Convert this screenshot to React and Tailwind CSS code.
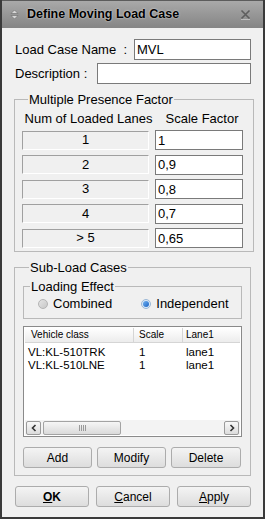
import React from 'react';

const font = { fontFamily: '"Liberation Sans", Arial, sans-serif' };

const lanes = [
    { label: '1', value: '1' },
    { label: '2', value: '0,9' },
    { label: '3', value: '0,8' },
    { label: '4', value: '0,7' },
    { label: '> 5', value: '0,65' },
];

const subCases = [
    { vehicle: 'VL:KL-510TRK', scale: '1', lane: 'lane1' },
    { vehicle: 'VL:KL-510LNE', scale: '1', lane: 'lane1' },
];

function Btn({ children, className = '' }) {
    return (
        <button
            type="button"
            className={"h-[21px] rounded-[3px] border border-[#acacac] bg-gradient-to-b from-[#f4f4f4] to-[#dddddd] text-[12px] text-black leading-none " + className}
        >
            {children}
        </button>
    );
}

function Radio({ checked, label }) {
    return (
        <label className="flex items-center gap-[5px]">
            {checked ? (
                <span className="w-[10px] h-[10px] rounded-full border border-[#9bb8d6] bg-[#dbe9f7] flex items-center justify-center">
                    <span className="w-[6px] h-[6px] rounded-full bg-gradient-to-br from-[#6fb2f2] to-[#1b64c4]" />
                </span>
            ) : (
                <span className="w-[10px] h-[10px] rounded-full border border-[#b4b4b4] bg-gradient-to-br from-[#e4e4e4] to-[#c8c8c8]" />
            )}
            <span className="text-[13px] text-black">{label}</span>
        </label>
    );
}

export default function App() {
    return (
        <div className="w-[265px] h-[519px] bg-[#3a3a3a] px-[2px] pb-[2px] flex flex-col" style={font}>
            {/* title bar */}
            <div className="h-[28px] shrink-0 flex items-center bg-gradient-to-b from-[#a9a9a9] to-[#858585] border-t border-[#5c5c5c] pl-[8px] pr-[12px]">
                <svg width="9" height="11" viewBox="0 0 9 11" className="mr-[8px]">
                    <path d="M4.5 1 L8 4.5 L1 4.5 Z" fill="#d8d8d8" stroke="#6a6a6a" strokeWidth="0.6" />
                    <path d="M4.5 10 L8 6.5 L1 6.5 Z" fill="#d8d8d8" stroke="#6a6a6a" strokeWidth="0.6" />
                </svg>
                <span className="text-[12.5px] font-bold text-black [text-shadow:0_0_2px_#e8e8e8]">Define Moving Load Case</span>
                <svg width="11" height="11" viewBox="0 0 11 11" className="ml-auto">
                    <path d="M1.5 1.5 L9.5 9.5 M9.5 1.5 L1.5 9.5" stroke="#5e5e5e" strokeWidth="1.6" />
                    <path d="M1 10.5 H10" stroke="#bdbdbd" strokeWidth="1" />
                </svg>
            </div>

            {/* body */}
            <div className="flex-1 bg-[#f0f0f0] px-[12px] pt-[11px] flex flex-col text-black">
                <div className="flex items-center h-[21px]">
                    <span className="text-[13px] w-[120px] pl-[1px]">Load Case Name&nbsp;&nbsp;:</span>
                    <input className="h-[21px] w-[117px] ml-auto border border-[#7a7a7a] bg-white px-[2px] text-[13px] outline-none" defaultValue="MVL" />
                </div>
                <div className="flex items-center h-[21px] mt-[3px]">
                    <span className="text-[13px] pl-[1px]">Description :</span>
                    <input className="h-[21px] w-[154px] ml-auto border border-[#7a7a7a] bg-white px-[2px] text-[13px] outline-none" />
                </div>

                {/* Multiple Presence Factor */}
                <fieldset className="mt-[8px] border border-[#b9b9b9] px-[7px] pb-[3px]">
                    <legend className="ml-[6px] px-[1px] text-[13px] leading-[15px]">Multiple Presence Factor</legend>
                    <div className="flex text-[13px] h-[16px] mt-[4px] items-center">
                        <span className="w-[133px] text-center">Num of Loaded Lanes</span>
                        <span className="ml-[3px] w-[88px] text-center">Scale Factor</span>
                    </div>
                    <div className="flex flex-col gap-[4.5px] mt-[3px]">
                        {lanes.map(l => (
                            <div key={l.label} className="flex items-center h-[20px]">
                                <div className="w-[127px] h-[19px] border-l border-t border-[#a0a0a0] border-b border-r border-b-white border-r-white bg-[#f0f0f0] flex items-center justify-center text-[13px]">
                                    {l.label}
                                </div>
                                <input
                                    className="ml-[6px] w-[88px] h-[20px] border border-[#7a7a7a] bg-white px-[2px] text-[13px] outline-none"
                                    defaultValue={l.value}
                                />
                            </div>
                        ))}
                    </div>
                </fieldset>

                {/* Sub-Load Cases */}
                <fieldset className="mt-[8px] border border-[#b9b9b9] px-[8px] pb-[7px]">
                    <legend className="ml-[6px] px-[1px] text-[13px] leading-[15px]">Sub-Load Cases</legend>
                    <fieldset className="mt-[4px] border border-[#b9b9b9] pb-[5px]">
                        <legend className="ml-[6px] px-[1px] text-[13px] leading-[15px]">Loading Effect</legend>
                        <div className="flex items-center h-[19px] pl-[14px]">
                            <Radio label="Combined" />
                            <div className="ml-[29px]">
                                <Radio checked label="Independent" />
                            </div>
                        </div>
                    </fieldset>

                    {/* list */}
                    <div className="mt-[7px] h-[111px] border border-[#8a8a8a] bg-white flex flex-col p-[1px]">
                        <div className="flex h-[15px] bg-gradient-to-b from-[#ffffff] to-[#ececec] border-b border-[#d5d5d5] text-[10px] leading-none">
                            <div className="w-[109px] pl-[6px] flex items-center border-r border-[#d5d5d5]">Vehicle class</div>
                            <div className="w-[49px] pl-[5px] flex items-center border-r border-[#d5d5d5]">Scale</div>
                            <div className="flex-1 pl-[3px] flex items-center">Lane1</div>
                        </div>
                        <div className="flex-1 pt-[3px]">
                            {subCases.map(s => (
                                <div key={s.vehicle} className="flex h-[12.5px] text-[11.5px] leading-[12.5px]">
                                    <div className="w-[109px] pl-[3px]">{s.vehicle}</div>
                                    <div className="w-[49px] pl-[5px]">{s.scale}</div>
                                    <div className="flex-1 pl-[3px]">{s.lane}</div>
                                </div>
                            ))}
                        </div>
                        {/* scrollbar */}
                        <div className="h-[15px] bg-[#f3f3f3] flex items-center px-[1px] gap-[2px]">
                            <div className="w-[15px] h-[14px] border border-[#9a9a9a] rounded-[2px] bg-gradient-to-b from-[#f8f8f8] to-[#dcdcdc] flex items-center justify-center">
                                <svg width="6" height="8" viewBox="0 0 6 8"><path d="M4.5 1 L1.5 4 L4.5 7" stroke="#333" strokeWidth="1.6" fill="none" /></svg>
                            </div>
                            <div className="w-[78px] h-[14px] border border-[#a3a3a3] rounded-[2px] bg-gradient-to-b from-[#f6f6f6] to-[#dadada] flex items-center justify-center">
                                <span className="flex gap-[1px]">
                                    <span className="w-[1px] h-[6px] bg-[#9a9a9a]" />
                                    <span className="w-[1px] h-[6px] bg-[#9a9a9a]" />
                                    <span className="w-[1px] h-[6px] bg-[#9a9a9a]" />
                                    <span className="w-[1px] h-[6px] bg-[#9a9a9a]" />
                                </span>
                            </div>
                            <div className="ml-auto w-[15px] h-[14px] border border-[#9a9a9a] rounded-[2px] bg-gradient-to-b from-[#f8f8f8] to-[#dcdcdc] flex items-center justify-center">
                                <svg width="6" height="8" viewBox="0 0 6 8"><path d="M1.5 1 L4.5 4 L1.5 7" stroke="#333" strokeWidth="1.6" fill="none" /></svg>
                            </div>
                        </div>
                    </div>

                    <div className="flex justify-between mt-[10px] pr-[1px]">
                        <Btn className="w-[69px]">Add</Btn>
                        <Btn className="w-[69px]">Modify</Btn>
                        <Btn className="w-[70px]">Delete</Btn>
                    </div>
                </fieldset>

                <div className="flex justify-between mt-[10px] pl-[1px]">
                    <Btn className="w-[74px]"><b><span className="underline">O</span>K</b></Btn>
                    <Btn className="w-[74px]"><span className="underline">C</span>ancel</Btn>
                    <Btn className="w-[74px]"><span className="underline">A</span>pply</Btn>
                </div>
            </div>
        </div>
    );
}
